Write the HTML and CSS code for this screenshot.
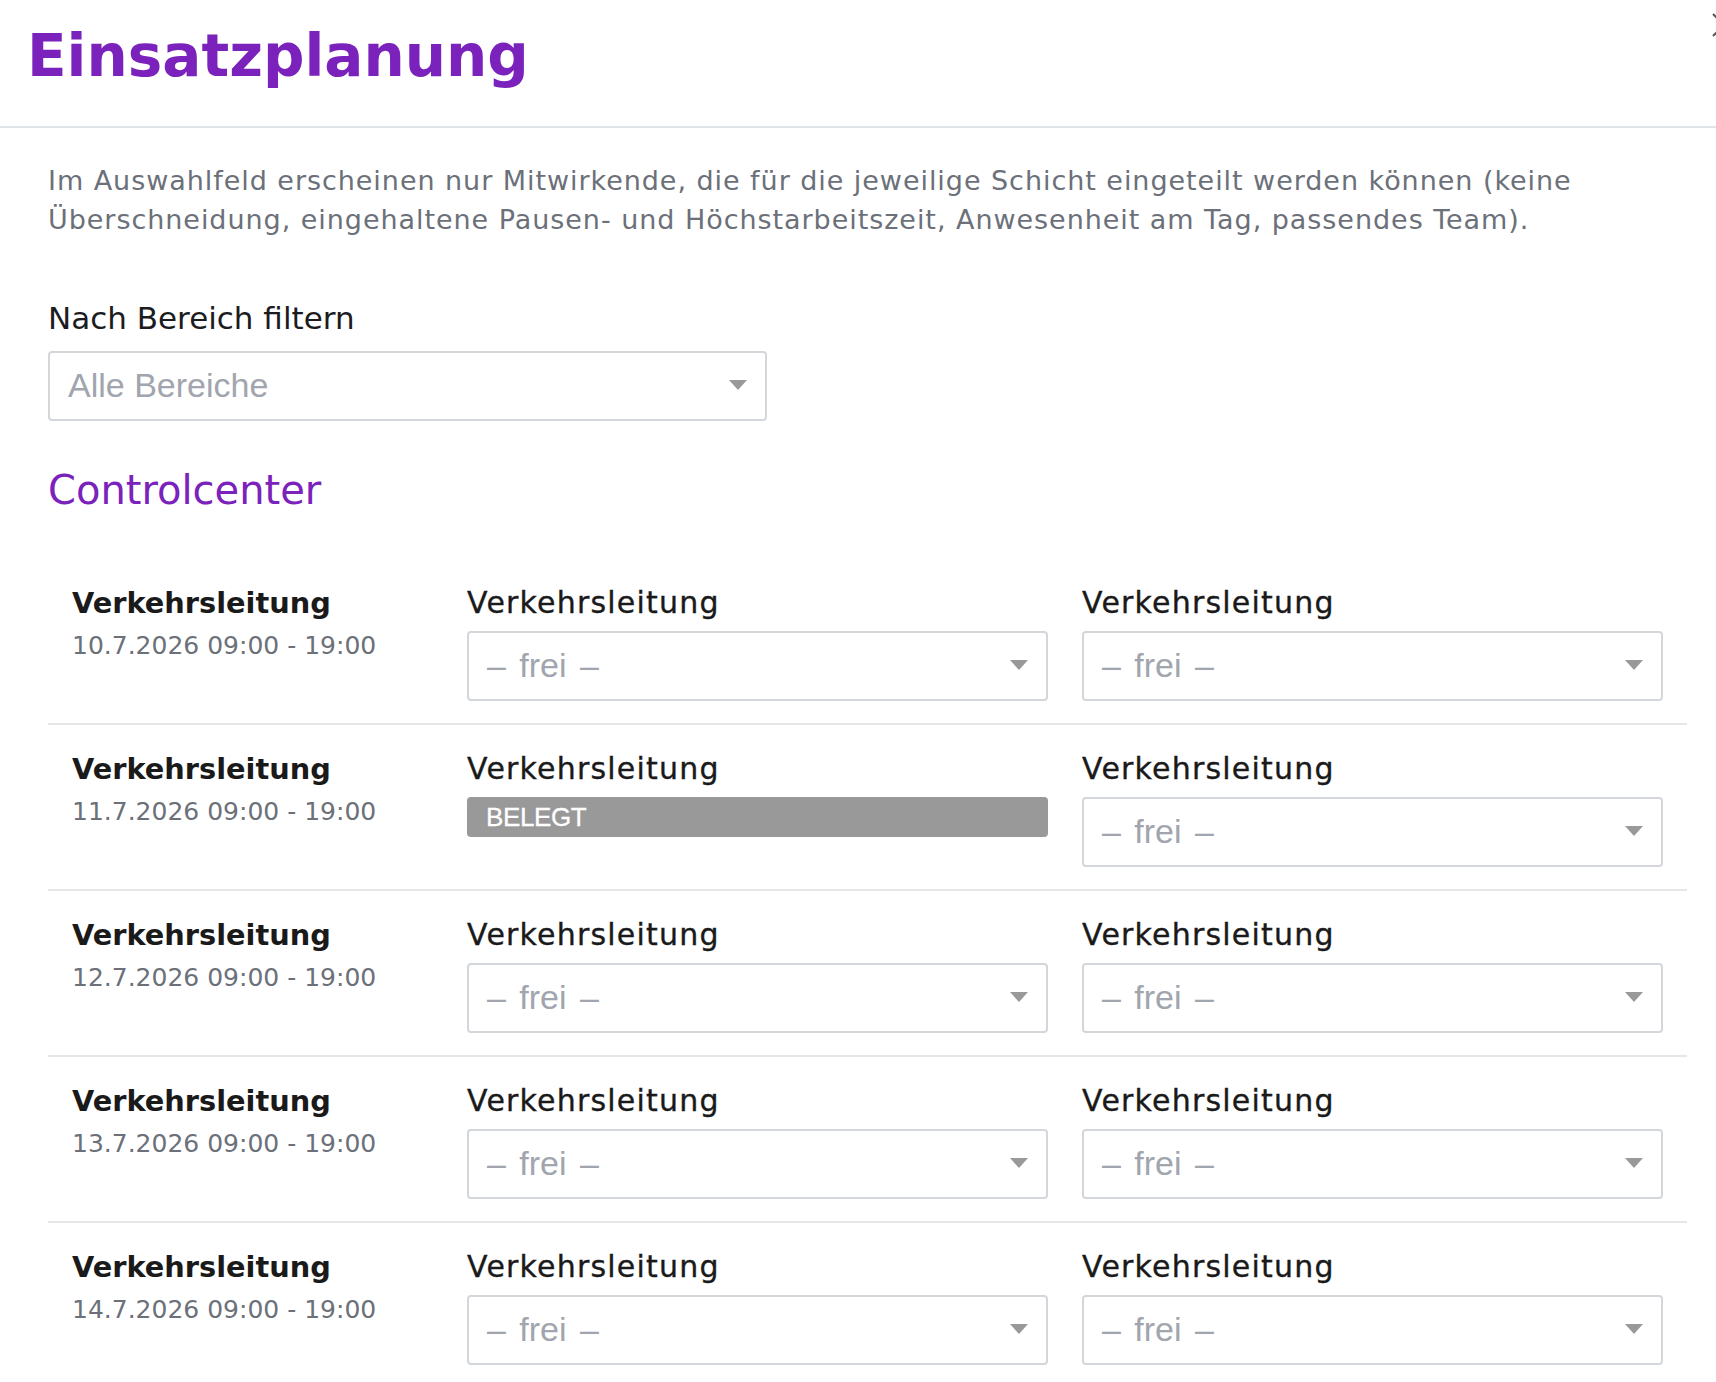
FILE: index.html
```html
<!DOCTYPE html>
<html lang="de">
<head>
<meta charset="utf-8">
<title>Einsatzplanung</title>
<link rel="stylesheet" href="styles.css">
</head>
<body>
<div class="modal">
  <header class="modal-header">
    <h1 class="modal-title">Einsatzplanung</h1>
    <button class="close-btn" aria-label="Schließen">
      <svg width="24" height="24" viewBox="0 0 24 24"><path d="M1 1 L23 23 M23 1 L1 23" stroke="#555" stroke-width="2" fill="none"/></svg>
    </button>
  </header>
  <div class="modal-body">
    <p class="hint">Im Auswahlfeld erscheinen nur Mitwirkende, die für die jeweilige Schicht eingeteilt werden können (keine Überschneidung, eingehaltene Pausen- und Höchstarbeitszeit, Anwesenheit am Tag, passendes Team).</p>

    <div class="filter">
      <label class="filter-label">Nach Bereich filtern</label>
      <div class="select select-filter"><span class="placeholder">Alle Bereiche</span><span class="caret"></span></div>
    </div>

    <h2 class="area-title">Controlcenter</h2>

    <div class="shifts">
      <div class="shift-row">
        <div class="shift-info"><div class="shift-name">Verkehrsleitung</div><div class="shift-time">10.7.2026 09:00 - 19:00</div></div>
        <div class="slot"><div class="slot-label">Verkehrsleitung</div><div class="select"><span class="placeholder free">– frei –</span><span class="caret"></span></div></div>
        <div class="slot"><div class="slot-label">Verkehrsleitung</div><div class="select"><span class="placeholder free">– frei –</span><span class="caret"></span></div></div>
      </div>
      <div class="shift-row">
        <div class="shift-info"><div class="shift-name">Verkehrsleitung</div><div class="shift-time">11.7.2026 09:00 - 19:00</div></div>
        <div class="slot"><div class="slot-label">Verkehrsleitung</div><div class="taken">BELEGT</div></div>
        <div class="slot"><div class="slot-label">Verkehrsleitung</div><div class="select"><span class="placeholder free">– frei –</span><span class="caret"></span></div></div>
      </div>
      <div class="shift-row">
        <div class="shift-info"><div class="shift-name">Verkehrsleitung</div><div class="shift-time">12.7.2026 09:00 - 19:00</div></div>
        <div class="slot"><div class="slot-label">Verkehrsleitung</div><div class="select"><span class="placeholder free">– frei –</span><span class="caret"></span></div></div>
        <div class="slot"><div class="slot-label">Verkehrsleitung</div><div class="select"><span class="placeholder free">– frei –</span><span class="caret"></span></div></div>
      </div>
      <div class="shift-row">
        <div class="shift-info"><div class="shift-name">Verkehrsleitung</div><div class="shift-time">13.7.2026 09:00 - 19:00</div></div>
        <div class="slot"><div class="slot-label">Verkehrsleitung</div><div class="select"><span class="placeholder free">– frei –</span><span class="caret"></span></div></div>
        <div class="slot"><div class="slot-label">Verkehrsleitung</div><div class="select"><span class="placeholder free">– frei –</span><span class="caret"></span></div></div>
      </div>
      <div class="shift-row">
        <div class="shift-info"><div class="shift-name">Verkehrsleitung</div><div class="shift-time">14.7.2026 09:00 - 19:00</div></div>
        <div class="slot"><div class="slot-label">Verkehrsleitung</div><div class="select"><span class="placeholder free">– frei –</span><span class="caret"></span></div></div>
        <div class="slot"><div class="slot-label">Verkehrsleitung</div><div class="select"><span class="placeholder free">– frei –</span><span class="caret"></span></div></div>
      </div>
    </div>
  </div>
</div>
</body>
</html>
```

FILE: styles.css
```css
* { box-sizing: border-box; }

html, body {
  margin: 0;
  padding: 0;
  background: #ffffff;
}

body {
  width: 1716px;
  height: 1382px;
  overflow: hidden;
  font-family: "DejaVu Sans", sans-serif;
  color: #1c1c1e;
}

.modal {
  width: 1716px;
}

.modal-header {
  position: relative;
  height: 128px;
  padding: 21px 0 0 27px;
  border-bottom: 2px solid #e0e4e9;
}

.modal-title {
  margin: 0;
  font-size: 58px;
  line-height: 70px;
  font-weight: 700;
  color: #7a22bb;
}

.close-btn {
  position: absolute;
  top: 13px;
  right: -20px;
  width: 24px;
  height: 24px;
  padding: 0;
  border: 0;
  background: none;
}

.close-btn svg { display: block; }

.modal-body {
  padding: 0 29px 0 48px;
}

.hint {
  margin: 33px 0 0;
  font-size: 27px;
  line-height: 39px;
  letter-spacing: 0.95px;
  color: #6b7079;
}

.filter {
  margin-top: 59px;
}

.filter-label {
  display: block;
  font-size: 31px;
  line-height: 40px;
  color: #1c1c1e;
}

.select {
  display: flex;
  align-items: center;
  height: 70px;
  padding: 0 18px 2px 18px;
  border: 2px solid #d3d7dc;
  border-radius: 4px;
  background: #fff;
  font-family: "Liberation Sans", Arial, sans-serif;
  font-size: 34px;
}

.select-filter {
  width: 719px;
  margin-top: 13px;
}

.placeholder {
  color: #a0a5ae;
  white-space: nowrap;
}

.placeholder.free {
  word-spacing: 4px;
}

.caret {
  margin-left: auto;
  width: 0;
  height: 0;
  border-left: 9px solid transparent;
  border-right: 9px solid transparent;
  border-top: 10px solid #999999;
}

.area-title {
  margin: 45px 0 0;
  font-size: 40px;
  line-height: 48px;
  font-weight: 400;
  color: #7a22bb;
}

.shifts {
  margin-top: 45px;
}

.shift-row {
  display: grid;
  grid-template-columns: 361px 1fr 1fr;
  column-gap: 34px;
  padding: 23px 24px 22px;
  border-bottom: 2px solid #e6e6e6;
}

.shift-row:last-child {
  border-bottom: 0;
}

.shift-name {
  font-size: 28.8px;
  line-height: 42px;
  font-weight: 700;
  color: #1a1a1a;
}

.shift-time {
  font-size: 25px;
  line-height: 44px;
  color: #6b7079;
}

.slot-label {
  font-size: 30px;
  line-height: 42px;
  letter-spacing: 1.2px;
  color: #1a1a1a;
  -webkit-text-stroke: 0.35px #1a1a1a;
}

.slot .select,
.slot .taken {
  margin-top: 7px;
}

.taken {
  height: 40px;
  padding: 0 19px;
  border-radius: 4px;
  background: #999999;
  color: #ffffff;
  font-family: "Liberation Sans", Arial, sans-serif;
  font-size: 26px;
  line-height: 40px;
  letter-spacing: -0.4px;
  -webkit-text-stroke: 0.3px #ffffff;
}
```
